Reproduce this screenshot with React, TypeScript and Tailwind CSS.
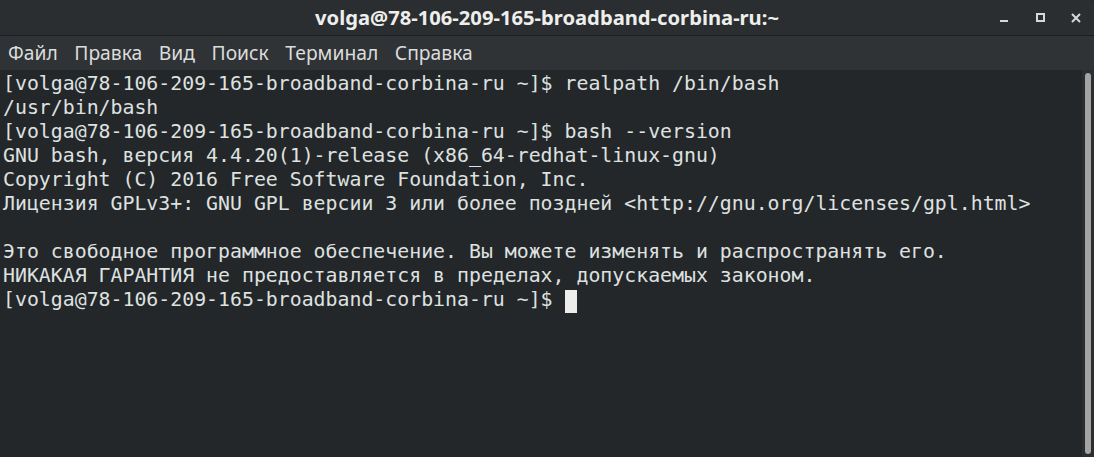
import React from "react";

const lines = [
  "[volga@78-106-209-165-broadband-corbina-ru ~]$ realpath /bin/bash",
  "/usr/bin/bash",
  "[volga@78-106-209-165-broadband-corbina-ru ~]$ bash --version",
  "GNU bash, версия 4.4.20(1)-release (x86_64-redhat-linux-gnu)",
  "Copyright (C) 2016 Free Software Foundation, Inc.",
  "Лицензия GPLv3+: GNU GPL версии 3 или более поздней <http://gnu.org/licenses/gpl.html>",
  "",
  "Это свободное программное обеспечение. Вы можете изменять и распространять его.",
  "НИКАКАЯ ГАРАНТИЯ не предоставляется в пределах, допускаемых законом.",
];

const menu = ["Файл", "Правка", "Вид", "Поиск", "Терминал", "Справка"];

const App = () => {
  return (
    <div className="w-[1094px] h-[457px] flex flex-col bg-[#232729] overflow-hidden">
      {/* title bar */}
      <div className="relative h-[36px] shrink-0 bg-[#2b2e31] border-b border-[#1b1d1f] rounded-tr-[4px] flex items-center justify-center">
        <span className="font-['Noto_Sans',sans-serif] font-bold text-[20.2px] text-[#eeeeec] leading-none -mt-[1px]">
          volga@78-106-209-165-broadband-corbina-ru:~
        </span>
        <div className="absolute right-0 top-0 h-full flex items-center text-[#d8d8d8]">
          <div className="w-[36px] h-full flex items-center justify-center">
            <div className="w-[8px] h-[2px] bg-[#d8d8d8] mt-[7px]" />
          </div>
          <div className="w-[36px] h-full flex items-center justify-center">
            <div className="w-[9px] h-[9px] border-2 border-[#d8d8d8]" />
          </div>
          <div className="w-[36px] h-full flex items-center justify-center">
            <svg width="10" height="10" viewBox="0 0 10 10">
              <path d="M1 1 L9 9 M9 1 L1 9" stroke="#d8d8d8" strokeWidth="2" />
            </svg>
          </div>
        </div>
      </div>
      {/* menu bar */}
      <div className="h-[34px] shrink-0 bg-[#2f3336] flex items-center pl-[8px] gap-[16.5px] font-['Noto_Sans',sans-serif] text-[19.3px] text-[#dcdcdc]">
        {menu.map((m) => (
          <span key={m}>{m}</span>
        ))}
      </div>
      {/* terminal */}
      <div className="flex-1 flex min-h-0">
        <div className="flex-1 pt-[2px] pl-[3px] font-['DejaVu_Sans_Mono',monospace] text-[19.85px] leading-[24px] text-[#dfe1e0] whitespace-pre">
          {lines.map((l, i) => (
            <div key={i} className="h-[24px]">
              {l}
            </div>
          ))}
          <div className="h-[24px] flex items-center">
            <span>{"[volga@78-106-209-165-broadband-corbina-ru ~]$ "}</span>
            <span className="inline-block w-[12px] h-[23px] bg-[#ededec] mt-[2px]" />
          </div>
        </div>
        <div className="w-[12px] shrink-0 bg-[#2a2e31] flex justify-center pt-[3px] pb-[3px]">
          <div className="w-[6px] h-full bg-[#a3a4a3] rounded-[3px]" />
        </div>
      </div>
    </div>
  );
};

export default App;
